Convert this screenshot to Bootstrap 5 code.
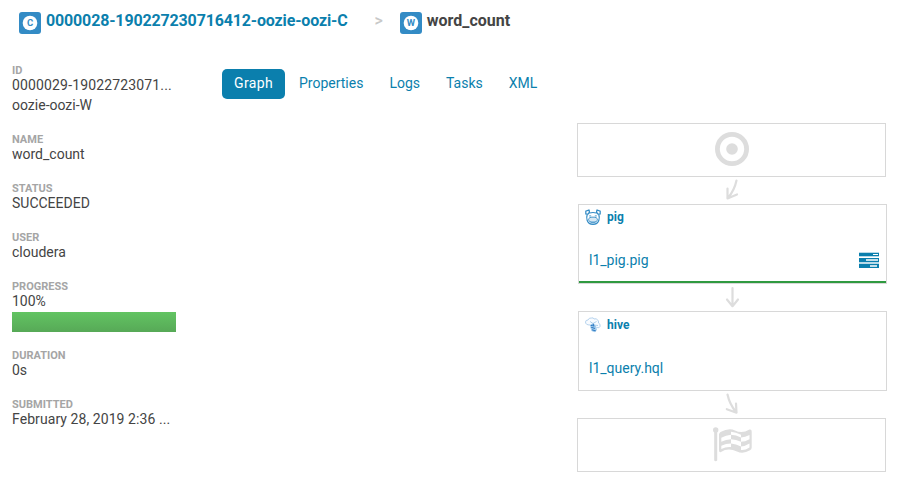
<!DOCTYPE html>
<html lang="en">
<head>
<meta charset="utf-8">
<meta name="viewport" content="width=device-width, initial-scale=1">
<title>word_count</title>
<link href="https://cdn.jsdelivr.net/npm/bootstrap@5.3.0/dist/css/bootstrap.min.css" rel="stylesheet">
<style>
body { font: 14px/20px Roboto, sans-serif; color: #444; background: #fff; overflow: hidden; }
a { color: #0b7fad; text-decoration: none; }
svg { display: block; flex: none; }
.crumbs { height: 41px; padding-left: 19px; font-size: 16px; font-weight: 700; }
.crumbs a { letter-spacing: -.15px; }
.crumb-icon { margin: 5px 5px 0 0; }
.crumb-sep { color: #c8c8c8; margin: 0 17px 0 27px; font-weight: 500; }
.side { width: 164px; margin: 24px 0 0 12px; }
.side dl { gap: 18px; }
.side dt { font-size: 11px; line-height: 11px; margin-bottom: -1px; color: #a5a5a5; font-weight: 700; }
.side dd { padding-bottom: 1px; }
.side .has-bar { padding-bottom: 0; }
.job-id { letter-spacing: .15px; }
.job-date { letter-spacing: .07px; }
.progress-box { height: 20px; margin-top: 1px; border-radius: 0; }
.progress-box .progress-bar { background: linear-gradient(#62c462, #57a957); }
.job-tabs { margin: 28px 0 0 46px; gap: 2px; }
.job-tabs .nav-link { color: #0b7fad; padding: 4px 12px 6px; border-radius: 5px; }
.job-tabs .nav-link.active { background: #0b7fad; color: #fff; letter-spacing: .35px; }
.graph { margin: 24px 0 0 401px; width: 310px; }
.node { border: 1px solid #d8d8d8; width: 309px; height: 54px; }
.task-node { height: 80px; margin-left: 1px; }
.task-node.done { box-shadow: inset 0 -2px #2f9a40; }
.task-title { font-size: 12px; font-weight: 700; line-height: 16px; padding: 4px 0 0 6px; gap: 6px; }
.task-node.waiting .task-title { padding-top: 5px; }
.task-body { padding: 25px 6px 0 10px; }
.server-icon { margin-top: 2px; }
.link-arrow { height: 27px; }
.stroke { fill: none; stroke: #ddd; stroke-width: 2.2; stroke-linecap: round; stroke-linejoin: round; }
.flag-icon { margin-left: 2px; }
</style>
</head>
<body>
<header class="crumbs d-flex align-items-center">
  <svg class="crumb-icon" width="22" height="22" viewBox="0 0 22 22"><rect width="22" height="22" rx="3" fill="#338bc5"/><circle cx="11" cy="11" r="7.3" fill="#fff"/><text x="11" y="14.2" text-anchor="middle" font-size="9.5" font-weight="700" fill="#338bc5">C</text></svg>
  <a href="#">0000028-190227230716412-oozie-oozi-C</a>
  <span class="crumb-sep">&gt;</span>
  <svg class="crumb-icon" width="22" height="22" viewBox="0 0 22 22"><rect width="22" height="22" rx="3" fill="#338bc5"/><circle cx="11" cy="11" r="7.3" fill="#fff"/><text x="11" y="14.2" text-anchor="middle" font-size="9.5" font-weight="700" fill="#338bc5">W</text></svg>
  <span>word_count</span>
</header>
<main class="d-flex">
  <aside class="side flex-shrink-0">
    <dl class="d-flex flex-column mb-0">
      <div><dt>ID</dt><dd class="mb-0"><span class="job-id">0000029-19022723071...</span><br>oozie-oozi-W</dd></div>
      <div><dt>NAME</dt><dd class="mb-0">word_count</dd></div>
      <div><dt>STATUS</dt><dd class="mb-0">SUCCEEDED</dd></div>
      <div><dt>USER</dt><dd class="mb-0">cloudera</dd></div>
      <div><dt>PROGRESS</dt><dd class="mb-0 has-bar">100%<div class="progress progress-box"><div class="progress-bar w-100"></div></div></dd></div>
      <div><dt>DURATION</dt><dd class="mb-0">0s</dd></div>
      <div><dt>SUBMITTED</dt><dd class="mb-0 job-date">February 28, 2019 2:36 ...</dd></div>
    </dl>
  </aside>
  <section class="flex-grow-1">
    <ul class="nav nav-pills job-tabs">
      <li class="nav-item"><a class="nav-link active" href="#">Graph</a></li>
      <li class="nav-item"><a class="nav-link" href="#">Properties</a></li>
      <li class="nav-item"><a class="nav-link" href="#">Logs</a></li>
      <li class="nav-item"><a class="nav-link" href="#">Tasks</a></li>
      <li class="nav-item"><a class="nav-link" href="#">XML</a></li>
    </ul>
    <div class="graph d-flex flex-column">
      <div class="node d-flex justify-content-center pt-2">
        <svg width="34" height="34" viewBox="0 0 34 34"><circle cx="17" cy="17" r="14.6" fill="none" stroke="#ddd" stroke-width="4.8"/><circle cx="17" cy="17" r="5.8" fill="#ddd"/></svg>
      </div>
      <svg class="link-arrow" width="310" viewBox="0 0 310 27"><path class="stroke" d="M159.5 3.5Q157.5 13 151 21M150.5 11.5L150.5 21.5L160 17.5"/></svg>
      <div class="node task-node done">
        <div class="task-title d-flex">
          <svg width="16" height="16" viewBox="0 0 16 16" fill="none" stroke="#338bc5" stroke-width="1.2"><path d="M.8 5L.8 2.2L4 1Q5.2 3 3 5.2ZM15.2 5L15.2 2.2L12 1Q10.8 3 13 5.2ZM4.5 4Q8 3 11.5 4M2.2 5.5Q1.2 8.5 2.2 11.5Q3.5 15.3 8 15.3T13.8 11.5Q14.8 8.5 13.8 5.5"/><ellipse cx="8" cy="10.6" rx="4.4" ry="2.5" stroke-width=".9" fill="#d7e8f4"/><path stroke-width=".9" d="M4.2 6.9h2M9.8 6.9h2M5.5 13.8h5"/></svg>
          <a href="#">pig</a>
        </div>
        <div class="task-body d-flex justify-content-between">
          <a href="#">l1_pig.pig</a>
          <svg class="server-icon" width="21" height="16" viewBox="0 0 21 16"><path fill="#b9dae8" d="M0 0h20v16H0z"/><path fill="#0b7fad" d="M0 1h20v3H0zM0 6h20v4H0zM0 12h20v4H0z"/><path fill="#fff" d="M0 5h20v1H0zM14 2h5v1h-5z"/><path fill="#c3dfea" d="M7 7h12v2H7zM11 13h7v2h-7z"/></svg>
        </div>
      </div>
      <svg class="link-arrow" width="310" viewBox="0 0 310 27"><path class="stroke" d="M155.5 4V22M150 15.5L155.5 22.2L161 15.5"/></svg>
      <div class="node task-node waiting">
        <div class="task-title d-flex">
          <svg width="16" height="16" viewBox="0 0 16 16"><path d="M5 8Q.5 8 .5 5Q.5 3 3 3Q4 .5 6.5 1Q8.5 .3 9 2Q12 1 12.5 3Q14 3.5 13.5 6Q15.8 7 15 9.5Q14.5 11.5 11.5 10.5" fill="#f8fbff" stroke="#a4c8e8" stroke-width=".8"/><path d="M5 4.5L8 6.5L11.5 4.5M9 8L13 8.5" fill="none" stroke="#8dbbe2" stroke-width=".7"/><path d="M6 7L8.5 6.5L11 9L12 13L9.5 15.3L6.5 14L5.2 10Z" fill="#a7cdec"/><path d="M5.5 8.2L7.8 8.8M6.2 10.2L10 11.5M7 12.7L10.8 14M8 6.8L9 9.5" fill="none" stroke="#2f7cc4" stroke-width="1.1"/></svg>
          <a href="#">hive</a>
        </div>
        <div class="task-body"><a href="#">l1_query.hql</a></div>
      </div>
      <svg class="link-arrow" width="310" viewBox="0 0 310 27"><path class="stroke" d="M150.5 3.5Q152.5 13 159 21M149.8 18.2L159.5 21.7L159 12.5"/></svg>
      <div class="node d-flex justify-content-center pt-2">
        <svg class="flag-icon" width="39" height="36" viewBox="0 0 39 36"><g fill="#ddd"><circle cx="2.7" cy="3" r="2.7"/><path d="M1.2 4h3v29.5q-1.5 1.5-3 0z"/><path d="M6 7.5Q6 6 7.5 5Q16 .5 22 3.5Q29 7 36.5 2.5Q38.7 2 38.7 4.5V20.5Q38.7 22.5 37 23.3Q30 27.5 24 24.5Q15 20.5 8 25Q6 26 6 23Z"/></g><path fill="#fff" d="M8.3 10.8Q13 8 18 7.7V12.2Q13 12.3 8.3 14.8ZM18 12.2Q23 12.2 28 14.7V10.4Q32 10.4 36.5 8V12.2Q32 14.7 28 14.7V19.5Q23 17 18 16.5ZM8.3 18.7Q13 16.5 18 16.5V20Q13 19.5 8.3 22ZM28 19.5Q32 19.3 36.5 16.5V20.5Q32 23.5 28 23ZM18 4.7Q23 5.3 28 7.7V10.4Q23 8 18 7.7Z"/></svg>
      </div>
    </div>
  </section>
</main>
<script src="https://cdn.jsdelivr.net/npm/bootstrap@5.3.0/dist/js/bootstrap.bundle.min.js"></script>
</body>
</html>
